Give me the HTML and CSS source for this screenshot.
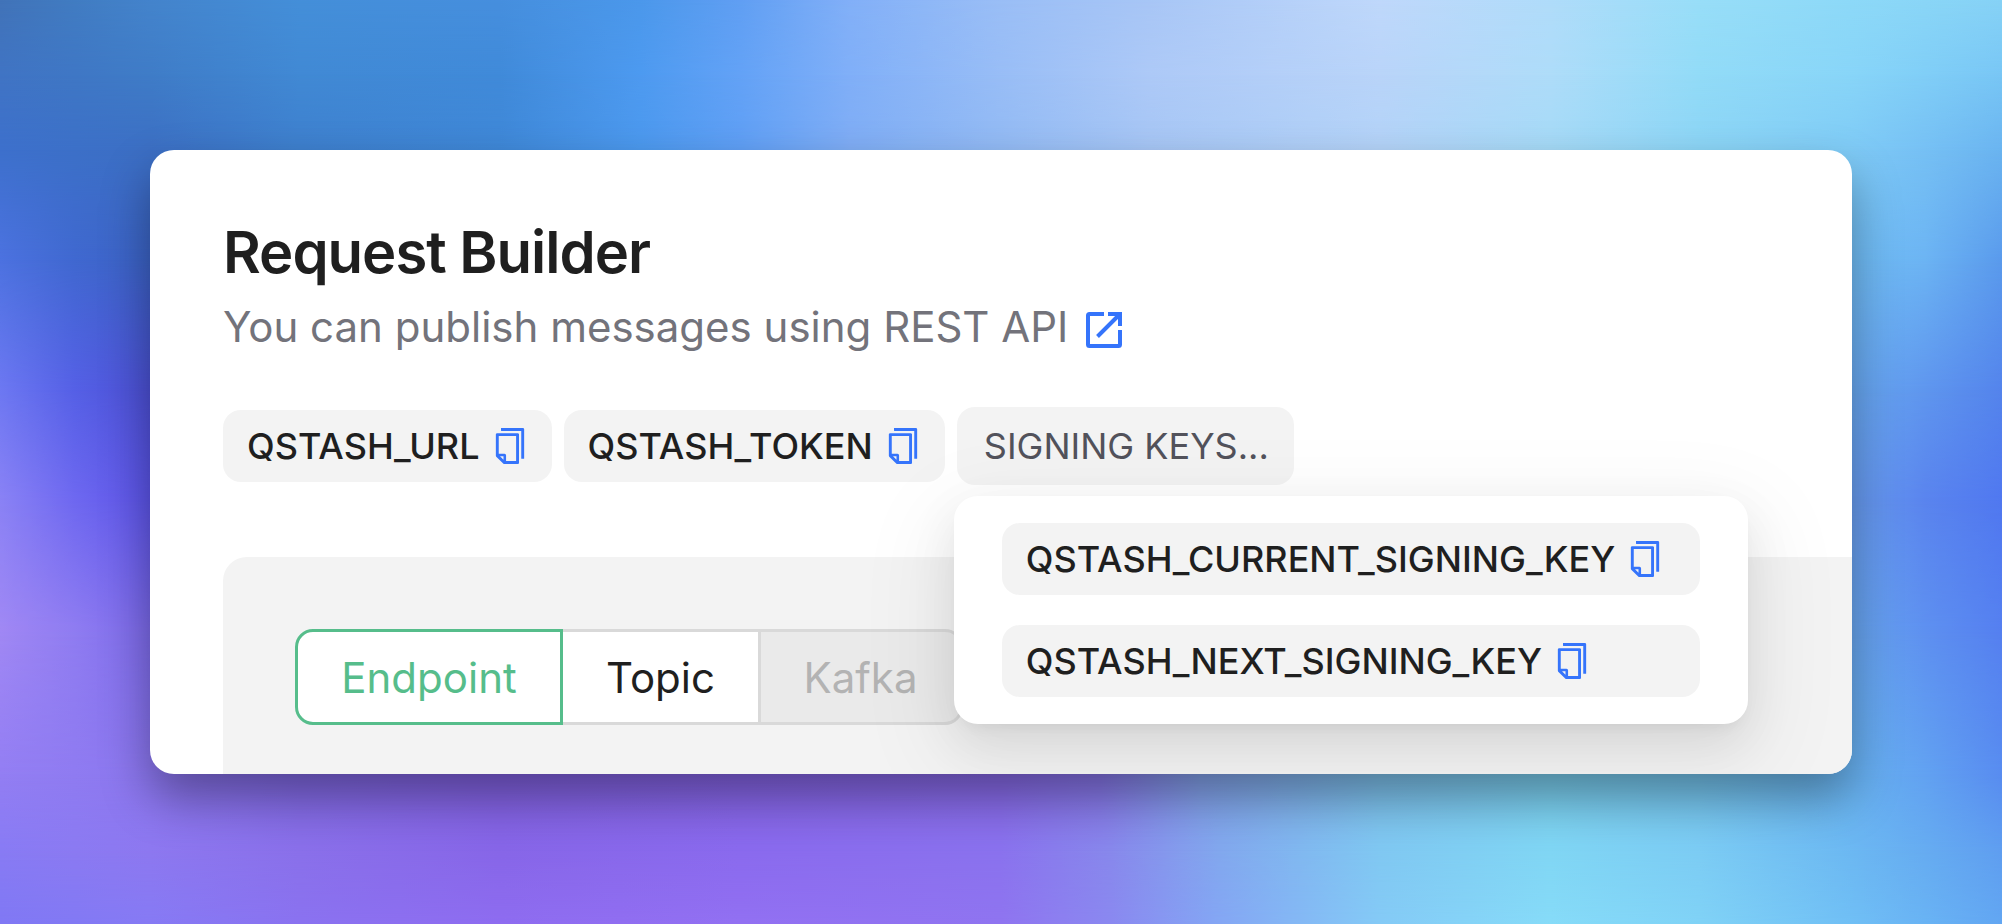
FILE: index.html
```html
<!DOCTYPE html>
<html lang="en">
<head>
<meta charset="utf-8">
<title>Request Builder</title>
<link rel="stylesheet" href="styles.css">
</head>
<body>
<svg class="sprite" aria-hidden="true">
  <symbol id="copy" viewBox="64 64 896 896"><path d="M832 64H296c-4.400 0-8 3.600-8 8v56c0 4.400 3.600 8 8 8h496v688c0 4.400 3.600 8 8 8h56c4.400 0 8-3.600 8-8V96c0-17.700-14.300-32-32-32zM704 192H192c-17.700 0-32 14.300-32 32v530.700c0 8.500 3.400 16.600 9.400 22.600l173.300 173.300c2.200 2.200 4.700 4 7.400 5.500v1.900h4.200c3.500 1.300 7.200 2 11 2H704c17.700 0 32-14.300 32-32V224c0-17.700-14.300-32-32-32zM350 856.200L263.900 770H350v86.200zM664 888H414V746c0-22.100-17.900-40-40-40H232V264h432v624z"/></symbol>
</svg>
<div class="backdrop" aria-hidden="true">
  <div class="band band-1"></div>
  <div class="band band-2"></div>
  <div class="band band-3"></div>
  <div class="band band-4"></div>
  <div class="band band-5"></div>
  <div class="band band-6"></div>
  <div class="band band-7"></div>
  <div class="band band-8"></div>
  <div class="band band-9"></div>
  <div class="band band-10"></div>
</div>
<main class="card">
  <h1 class="title">Request Builder</h1>
  <p class="subtitle"><span>You can publish messages using REST API</span>
    <svg class="external" viewBox="0 0 36 36"><path d="M18 2H3.500A1.500 1.500 0 0 0 2 3.500V32.500A1.500 1.500 0 0 0 3.500 34H32.500A1.500 1.500 0 0 0 34 32.500V18M22 2H34V14M33 3L11.500 24.500"/></svg>
  </p>
  <div class="chips">
    <button class="chip"><span>QSTASH_URL</span><svg class="copy"><use href="#copy"/></svg></button>
    <button class="chip"><span>QSTASH_TOKEN</span><svg class="copy"><use href="#copy"/></svg></button>
    <div class="signing">
      <button class="chip chip-more"><span>SIGNING KEYS...</span></button>
      <div class="popover">
        <button class="chip"><span>QSTASH_CURRENT_SIGNING_KEY</span><svg class="copy"><use href="#copy"/></svg></button>
        <button class="chip"><span>QSTASH_NEXT_SIGNING_KEY</span><svg class="copy"><use href="#copy"/></svg></button>
      </div>
    </div>
  </div>
  <section class="panel">
    <div class="tabs">
      <button class="tab tab-active">Endpoint</button>
      <button class="tab tab-topic">Topic</button>
      <button class="tab tab-disabled">Kafka</button>
    </div>
  </section>
</main>
</body>
</html>
```
FILE: styles.css
```css
* { box-sizing: border-box; }
body {
  margin: 0;
  width: 2002px;
  height: 924px;
  padding: 150px;
  overflow: hidden;
  position: relative;
  font-family: Inter, "Liberation Sans", sans-serif;
  color: #1f1f1f;
}
button { font: inherit; color: inherit; border: 0; margin: 0; padding: 0; background: none; }
.sprite { display: none; }

/* Soft colour field: horizontal gradients, each one fading in over the band above it */
.backdrop { position: absolute; inset: 0; }
.band { position: absolute; inset: 0; }
.band-1 { background: linear-gradient(90deg, #4173b8 0, #417cc2 75px, #4484cc 150px, #448fd9 300px, #468fde 500px, #4b98eb 640px, #609ff3 740px, #82b0f8 850px, #9abef6 1000px, #a8c6f6 1150px, #bfd8fb 1380px, #b0dcfa 1550px, #98def8 1700px, #8dd9f8 1850px, #8ad6f7 1925px, #86d2f6 2002px); }
.band-2 { background: linear-gradient(90deg, #4074c4 0, #3f77c5 75px, #3f7cc7 150px, #4189d4 300px, #408ad9 500px, #4d9af0 640px, #63a2f6 740px, #80aff8 850px, #98bdf6 1000px, #adc9f7 1150px, #b9d4f9 1380px, #aedcf9 1550px, #92dbf7 1700px, #88d5f8 1850px, #80cef7 1925px, #78c6f5 2002px); -webkit-mask-image: linear-gradient(transparent 0, #000 75px); }
.band-3 { background: linear-gradient(90deg, #3d70cc 0, #3c70c8 75px, #3c6fc4 150px, #3e80ce 300px, #3f88d8 500px, #4c99ee 640px, #5f9ff5 740px, #7fadf5 850px, #92baf4 1000px, #a6c6f5 1150px, #b3d3f8 1380px, #a5daf7 1550px, #8cd5f6 1700px, #7fcbf6 1850px, #76c0f4 1925px, #6ab4f0 2002px); -webkit-mask-image: linear-gradient(transparent 75px, #000 150px); }
.band-4 { background: linear-gradient(90deg, #4c72e0 0, #4068d0 75px, #3b62c4 150px, #70bcf4 1850px, #6cb4f3 1925px, #5a9aec 2002px); -webkit-mask-image: linear-gradient(transparent 150px, #000 260px); }
.band-5 { background: linear-gradient(90deg, #6d78f2 0, #5560e6 75px, #4c50d4 150px, #68a8f0 1850px, #5f96ee 1925px, #5484ec 2002px); -webkit-mask-image: linear-gradient(transparent 260px, #000 390px); }
.band-6 { background: linear-gradient(90deg, #8a82f5 0, #6e68f0 75px, #5c54e8 150px, #689cee 1850px, #5a84ee 1925px, #5078f0 2002px); -webkit-mask-image: linear-gradient(transparent 390px, #000 500px); }
.band-7 { background: linear-gradient(90deg, #a088f4 0, #8f7cf1 75px, #7c6aea 150px, #68a6ee 1850px, #5e90f0 1925px, #5580f0 2002px); -webkit-mask-image: linear-gradient(transparent 500px, #000 630px); }
.band-8 { background: linear-gradient(90deg, #937ef3 0, #8f7bf1 75px, #8b76ee 150px, #8068e4 300px, #8060e0 500px, #8463e4 740px, #8668e6 1000px, #8674e8 1100px, #82a0ea 1200px, #7cc0ec 1380px, #78cdee 1550px, #74c4ee 1700px, #68b2f0 1850px, #62a2f1 1925px, #588cf0 2002px); -webkit-mask-image: linear-gradient(transparent 630px, #000 774px); }
.band-9 { background: linear-gradient(90deg, #887bf4 0, #8b7af2 75px, #8d78f0 150px, #8a70ea 300px, #8766e8 500px, #8a6aee 740px, #8a72ee 1000px, #8888ec 1110px, #82a8ee 1220px, #80c8f2 1380px, #80d6f4 1550px, #7cccf4 1700px, #6cb8f2 1850px, #66acf1 1925px, #5f9ef0 2002px); -webkit-mask-image: linear-gradient(transparent 774px, #000 850px); }
.band-10 { background: linear-gradient(90deg, #8078f4 0, #8279f4 75px, #867af4 150px, #8a72f0 300px, #8e6cf0 500px, #9270f2 740px, #8f74f0 1000px, #8a88f0 1110px, #84a4f4 1210px, #84caf6 1380px, #86dbf8 1550px, #80d2f6 1700px, #70bff5 1850px, #69b3f4 1925px, #62a6f2 2002px); -webkit-mask-image: linear-gradient(transparent 850px, #000 924px); }

.card {
  position: relative;
  height: 624px;
  padding: 72px 0 0 73px;
  border-radius: 24px;
  background: #fff;
  box-shadow: 0 24px 48px rgba(0, 0, 0, .35);
  overflow: hidden;
}
.title {
  margin: 0;
  font-size: 58px;
  line-height: 60px;
  font-weight: 600;
  letter-spacing: -1px;
}
.subtitle {
  margin: 18px 0 0;
  display: flex;
  align-items: center;
  gap: 18px;
  font-size: 42px;
  line-height: 54px;
  color: #73737b;
}
.external {
  width: 36px;
  height: 36px;
  margin-top: 6px;
  fill: none;
  stroke: #3574fb;
  stroke-width: 4;
}
.chips {
  margin-top: 53px;
  display: flex;
  align-items: center;
  gap: 12px;
  font-size: 36px;
}
.chip {
  height: 72px;
  padding: 0 24px;
  display: flex;
  align-items: center;
  gap: 12px;
  border-radius: 18px;
  background: #f3f3f3;
  font-weight: 500;
  white-space: nowrap;
}
.copy { width: 36px; height: 36px; fill: #3574fb; }
.signing { position: relative; }
.chip-more {
  width: 337px;
  height: 78px;
  padding: 0 27px;
  font-weight: 400;
  color: #52525b;
}
.popover {
  position: absolute;
  z-index: 2;
  top: 89px;
  left: -3px;
  width: 794px;
  padding: 27px 48px;
  display: flex;
  flex-direction: column;
  gap: 30px;
  border-radius: 24px;
  background: #fff;
  box-shadow: 0 9px 18px -12px rgba(0, 0, 0, .12), 0 18px 48px rgba(0, 0, 0, .08), 0 27px 84px 24px rgba(0, 0, 0, .05);
}
.panel {
  margin-top: 72px;
  height: 230px;
  padding: 72px;
  border-radius: 24px 0 0 0;
  background: #f3f3f3;
}
.tabs { display: flex; font-size: 42px; }
.tab {
  height: 96px;
  border: 3px solid #d9d9d9;
  background: #fff;
}
.tab-active { width: 268px; border-color: #56bd8b; border-radius: 18px 0 0 18px; color: #56bd8b; }
.tab-topic { width: 198px; border-left: 0; }
.tab-disabled { width: 202px; border-left: 0; border-radius: 0 18px 18px 0; background: #eaeaea; color: #b3b3b3; }
```
